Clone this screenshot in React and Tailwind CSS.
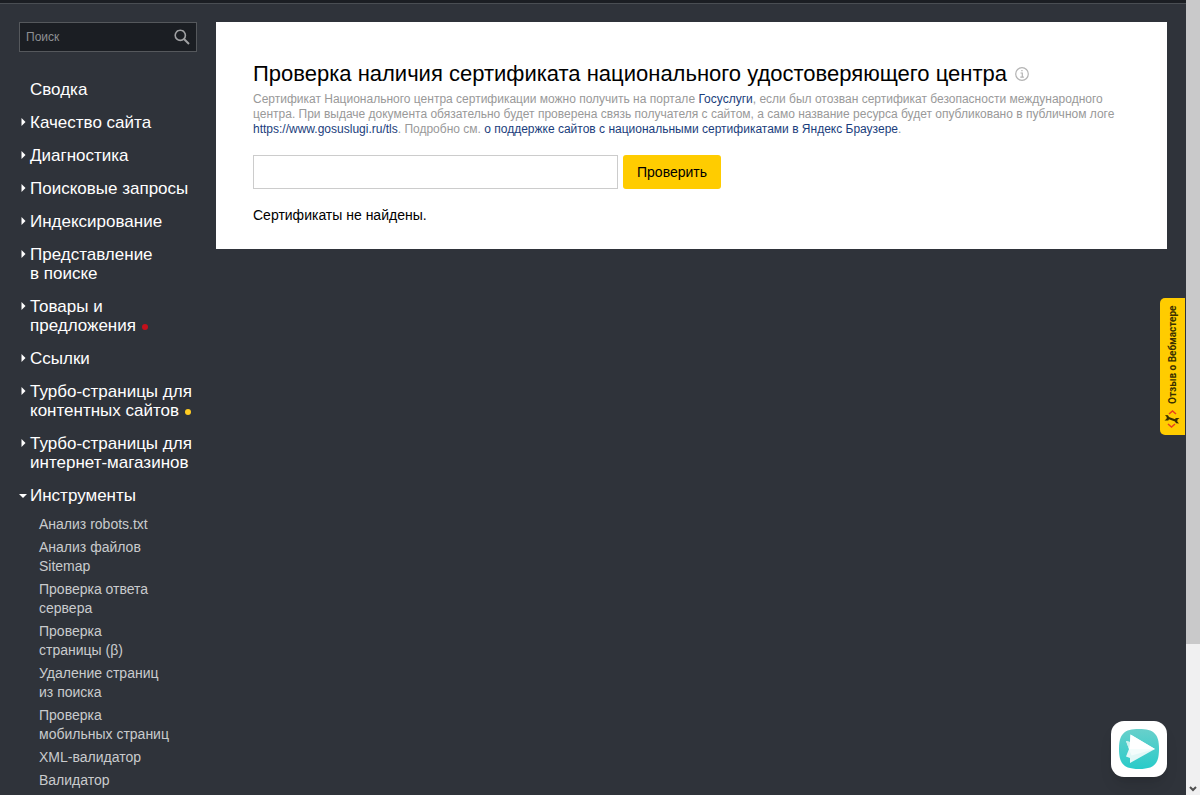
import clsx from 'clsx';

const menu = [
  { lines: ['Сводка'], plain: true },
  { lines: ['Качество сайта'] },
  { lines: ['Диагностика'] },
  { lines: ['Поисковые запросы'] },
  { lines: ['Индексирование'] },
  { lines: ['Представление', 'в поиске'] },
  { lines: ['Товары и', 'предложения'], dot: 'bg-[#c4101b]' },
  { lines: ['Ссылки'] },
  { lines: ['Турбо-страницы для', 'контентных сайтов'], dot: 'bg-[#ffcc22]' },
  { lines: ['Турбо-страницы для', 'интернет-магазинов'] },
  { lines: ['Инструменты'], open: true }
];

const tools = [
  ['Анализ robots.txt'],
  ['Анализ файлов', 'Sitemap'],
  ['Проверка ответа', 'сервера'],
  ['Проверка', 'страницы (β)'],
  ['Удаление страниц', 'из поиска'],
  ['Проверка', 'мобильных страниц'],
  ['XML-валидатор'],
  ['Валидатор']
];

function Arrow({ open }) {
  return (
    <svg className="w-2 h-[19px] shrink-0" viewBox="0 0 8 19" fill="#fff">
      {open ? <path d="M0 8h8L4 12z" /> : <path d="M2.500 5v8L6.500 9z" />}
    </svg>
  );
}

function Sidebar() {
  return (
    <aside className="w-[178px] shrink-0">
      <form className="flex items-center h-[30px] px-1.5 bg-[#1b1e23] border border-[#55585c]">
        <input
          type="search"
          aria-label="Поиск"
          placeholder="Поиск"
          className="flex-1 min-w-0 text-xs text-white placeholder:text-[#8e9093] outline-none"
        />
        <button type="submit" aria-label="Найти">
          <svg className="w-4 h-4" viewBox="0 0 16 16" fill="none" stroke="#a0a1a3" strokeWidth="1.6">
            <circle cx="6.3" cy="6.3" r="5.1" />
            <path d="M10 10l5 5" strokeWidth="2" />
          </svg>
        </button>
      </form>

      <nav className="mt-7 text-white text-[17px] leading-[19px]">
        <ul className="flex flex-col gap-[14px]">
          {menu.map((item) => (
            <li key={item.lines.join(' ')}>
              <a href="#" className={clsx('flex gap-[3px] whitespace-nowrap', item.plain && 'pl-[11px]')}>
                {!item.plain && <Arrow open={item.open} />}
                <span>
                  {item.lines.map((line, i) => (
                    <span key={line} className="block">
                      {line}
                      {item.dot && i === item.lines.length - 1 && (
                        <span className={clsx('inline-block w-1.5 h-1.5 ml-1.5 mb-px rounded-full', item.dot)} />
                      )}
                    </span>
                  ))}
                </span>
              </a>
            </li>
          ))}
        </ul>

        <ul className="flex flex-col gap-1 mt-2.5 pl-5 text-sm leading-[19px] text-[#c9cbcd]">
          {tools.map((lines) => (
            <li key={lines.join(' ')}>
              <a href="#" className="block whitespace-nowrap">
                {lines.map((line) => (
                  <span key={line} className="block">{line}</span>
                ))}
              </a>
            </li>
          ))}
        </ul>
      </nav>
    </aside>
  );
}

function CertificateCheck() {
  return (
    <section className="px-[37px] pt-[38px] pb-6 bg-white text-black">
      <div className="flex items-center gap-2">
        <h1 className="text-[22px] leading-7">
          Проверка наличия сертификата национального удостоверяющего центра
        </h1>
        <svg className="w-[14px] h-[14px] shrink-0" viewBox="0 0 14 14" fill="none" stroke="#b3b3b3">
          <circle cx="7" cy="7" r="6.3" strokeWidth="1.2" />
          <path d="M5.5 6h1.8v4M5.3 10.2h3.6M6.3 3.7h1.3" strokeWidth="1.2" />
        </svg>
      </div>
      <p className="mt-1 text-xs leading-[15px] text-[#999]">
        Сертификат Национального центра сертификации можно получить на портале{' '}
        <a href="#" className="text-[#1a3d7c]">Госуслуги</a>, если был отозван сертификат безопасности международного
        <br />
        центра. При выдаче документа обязательно будет проверена связь получателя с сайтом, а само название ресурса
        будет опубликовано в публичном логе
        <br />
        <a href="#" className="text-[#1a3d7c]">https://www.gosuslugi.ru/tls</a>. Подробно см.{' '}
        <a href="#" className="text-[#1a3d7c]">
          о поддержке сайтов с национальными сертификатами в Яндекс Браузере
        </a>.
      </p>
      <form className="flex gap-[5px] mt-[18px] text-sm">
        <input
          type="text"
          aria-label="Адрес сайта"
          className="w-[365px] h-[34px] px-2 border border-[#ccc] outline-none"
        />
        <button type="submit" className="h-[34px] px-[14px] bg-[#ffcc00] rounded-[3px]">
          Проверить
        </button>
      </form>
      <p className="mt-4 text-sm">Сертификаты не найдены.</p>
    </section>
  );
}

function FeedbackTab() {
  return (
    <button
      type="button"
      className="absolute right-px top-[298px] w-[25px] h-[137px] flex items-center justify-center gap-1.5 bg-[#ffcc00] rounded-r-[5px] text-[#3a3000] font-['Roboto',sans-serif] text-[10px] font-bold [writing-mode:vertical-rl] rotate-180"
    >
      <svg className="w-[18px] h-[18px] shrink-0 rotate-180" viewBox="0 0 18 18" fill="none">
        <path d="M6 4l3.500-3L13 4M5 14l3.500 3 3.500-3" stroke="#e8401e" strokeWidth="1.5" />
        <path d="M4 7.500l10 3.500" stroke="#3a3000" strokeWidth="2.2" />
        <path d="M2 5l3 .3L6.500 8l-1.200 2.500-3.800-.1 2.300-1.800-.1-1.600z" fill="#3a3000" />
        <path d="M16 13.500l-3-.3-1.500-2.700L12.700 8l3.800.1-2.300 1.800.1 1.600z" fill="#3a3000" />
      </svg>
      <span>Отзыв о Вебмастере</span>
    </button>
  );
}

function ChatButton() {
  return (
    <button
      type="button"
      aria-label="Открыть чат"
      className="absolute right-[19px] bottom-[18px] w-14 h-14 flex items-center justify-center bg-white rounded-[13px] shadow-lg"
    >
      <svg className="w-10 h-10" viewBox="0 0 40 40">
        <defs>
          <linearGradient id="chat" x1="0" y1="0" x2="0" y2="1">
            <stop offset="0" stopColor="#68d0cb" />
            <stop offset="1" stopColor="#29cbc9" />
          </linearGradient>
        </defs>
        <path d="M20 0c15 0 20 5 20 20s-5 20-20 20S0 35 0 20 5 0 20 0z" fill="url(#chat)" />
        {/* plane silhouette, then the brighter wing and the shaded fold */}
        <path d="M11.500 5.500L36 20 11 34v-5l-4-1.500L10 20 7 12l4 1z" fill="#e3f8f7" />
        <path d="M11.500 5.500L36 20 10 20 11 13z" fill="#fff" />
        <path d="M10 20h26l-23.500 6.500z" fill="#f4fdfc" />
        <path d="M7 12l4 1-1 7z" fill="#cdf2ef" />
      </svg>
    </button>
  );
}

function Scrollbar() {
  return (
    <div className="flex flex-col w-[14px] shrink-0 bg-[#f0f0f1]" aria-hidden="true">
      <div className="h-[81%] bg-[#c9c9ca]" />
      <svg className="w-2 h-2 mt-auto mb-0.5 mx-auto" viewBox="0 0 8 8" fill="none" stroke="#505050" strokeWidth="2">
        <path d="M1 2l3 3 3-3" />
      </svg>
    </div>
  );
}

export default function App() {
  return (
    <div className="flex h-screen overflow-hidden bg-[#2f333a] font-['Liberation_Sans',Arial,sans-serif]">
      <div className="relative flex-1 min-w-0 overflow-hidden">
        <div className="h-1 bg-[#1b1e23] border-b border-[#4a4e53]" />
        <div className="flex items-start gap-[19px] pt-[18px] px-[19px]">
          <Sidebar />
          <main className="flex-1 min-w-0">
            <CertificateCheck />
          </main>
        </div>
        <FeedbackTab />
        <ChatButton />
      </div>
      <Scrollbar />
    </div>
  );
}
